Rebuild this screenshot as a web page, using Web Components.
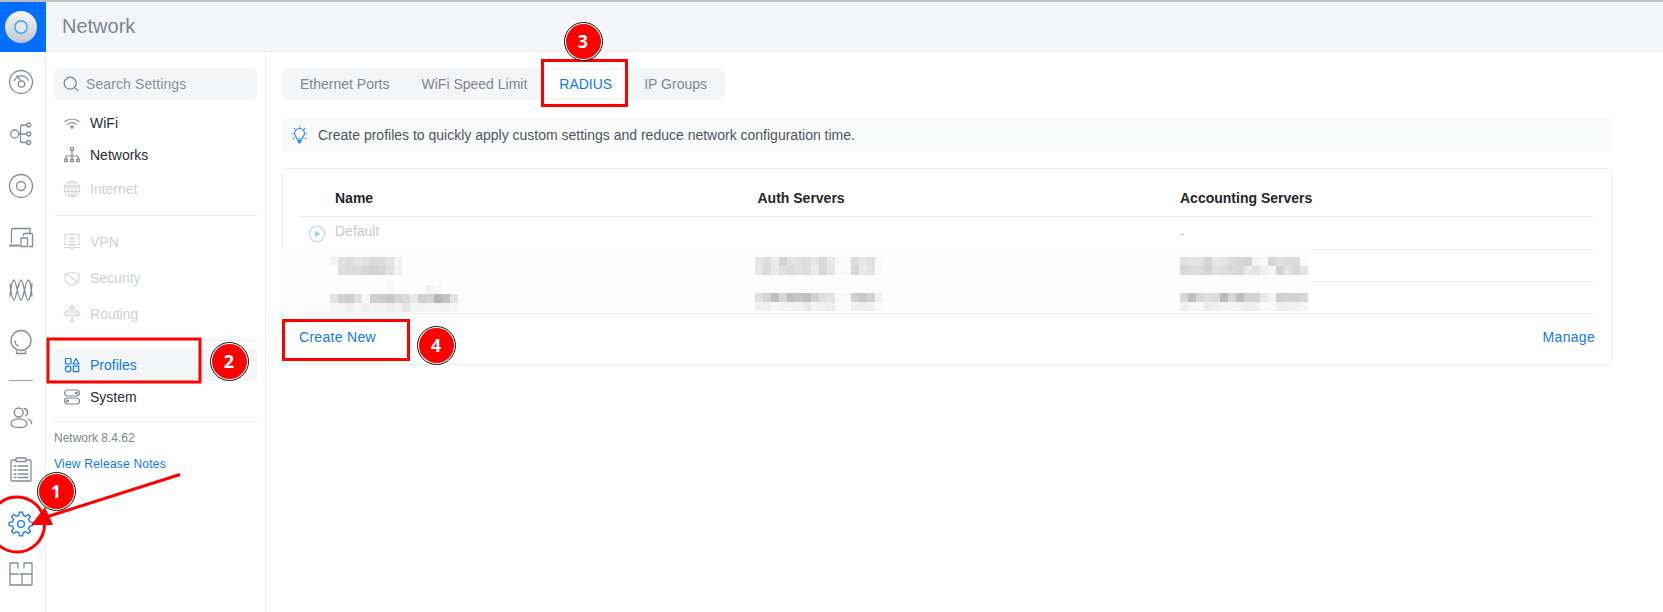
<!DOCTYPE html>
<html lang="en"><head><meta charset="utf-8"><title>Network</title>
<style>html,body{margin:0;height:100%;background:#fff;overflow:hidden;font-family:"Liberation Sans",Arial,sans-serif}</style>
</head><body>
<app-shell>
  <top-bar slot="top" title-text="Network"></top-bar>
  <icon-rail slot="rail"></icon-rail>
  <settings-nav slot="nav"></settings-nav>
  <div slot="main">
    <tab-strip></tab-strip>
    <hint-bar>Create profiles to quickly apply custom settings and reduce network configuration time.</hint-bar>
    <radius-card></radius-card>
  </div>
</app-shell>
<guide-layer></guide-layer>
<script>
const S='fill="none" stroke="currentColor" stroke-width="1.2" stroke-linecap="round" stroke-linejoin="round"';
const svg=(w,d)=>`<svg width="${w}" height="${w}" viewBox="0 0 ${w} ${w}" ${S}>${d}</svg>`;
function def(name,html,init){customElements.define(name,class extends HTMLElement{
  connectedCallback(){if(this.shadowRoot)return;this.attachShadow({mode:'open'}).innerHTML=typeof html==='function'?html(this):html;init&&init(this)}
})}
function gearPath(){let p='';const n=8,c=14;for(let k=0;k<n;k++){const a=k/n*Math.PI*2-Math.PI/2,w=Math.PI/n;
  const pt=(r,t)=>(c+r*Math.cos(t)).toFixed(2)+' '+(c+r*Math.sin(t)).toFixed(2);
  p+=(k?'L':'M')+pt(8.8,a-w*.62)+'L'+pt(12,a-w*.34)+'L'+pt(12,a+w*.34)+'L'+pt(8.8,a+w*.62)}
  return p+'Z'}
def('app-shell',`<style>
:host{display:grid;grid-template-columns:46px 220px 1fr;grid-template-rows:52px 560px;height:612px;box-sizing:border-box}
.top{grid-column:1/4}
.rail{border-right:1px solid #edeef0;box-sizing:border-box}
.nav{border-right:1px solid #edeef0;box-sizing:border-box}
.main{padding:16px 51px 0 16px;min-width:0}
</style><div class="top"><slot name="top"></slot></div><div class="rail"><slot name="rail"></slot></div><div class="nav"><slot name="nav"></slot></div><div class="main"><slot name="main"></slot></div>`);
def('top-bar',e=>`<style>
:host{display:flex;height:52px;box-sizing:border-box;border-top:2px solid #bcbec2;background:#f4f5f6;border-bottom:1px solid #ebedef}
.logo{width:46px;height:50px;margin-bottom:-1px;background:#006fff;display:flex;align-items:center;justify-content:center;flex:none;box-sizing:border-box;padding-right:4px}
h1{margin:0 0 0 16px;font:400 20px/48px "Liberation Sans",Arial,sans-serif;color:#7e8590}
</style><div class="logo"><svg width="34" height="34" viewBox="0 0 34 34"><defs><linearGradient id="g" x1="0" y1="0" x2="0" y2="1"><stop offset="0" stop-color="#f6f7f8"/><stop offset="1" stop-color="#c4c6d2"/></linearGradient></defs><circle cx="17" cy="17" r="16" fill="url(#g)"/><circle cx="17" cy="17" r="6.200" fill="#e3e8f0" stroke="#45a5f6" stroke-width="1.500"/></svg></div><h1>${e.getAttribute('title-text')}</h1>`);
const railIcons=[
`<circle cx="14" cy="14" r="11.500"/><path d="M7.500 12.500A7.500 7.500 0 0 1 21.300 12.200M9.800 7.800l4.200 5"/><circle cx="14.500" cy="16" r="3.200"/>`,
`<circle cx="7.700" cy="14" r="4"/><circle cx="21.700" cy="5" r="2"/><circle cx="21.700" cy="14" r="2"/><circle cx="21.700" cy="22.500" r="2"/><path d="M11.700 14h8M19.700 5h-3.700q-2.500 0-2.500 2.500v13q0 2 2.500 2h3.700"/>`,
`<circle cx="14" cy="14" r="11.500"/><circle cx="14" cy="14" r="4.500"/>`,
`<path d="M4.500 18.500V6a1.500 1.500 0 0 1 1.500-1.500h17V9"/><path d="M16.500 11.500V10.500a1 1 0 0 1 1-1h7a1 1 0 0 1 1 1v12h-3"/><rect x="14" y="14" width="6.500" height="8.500"/><path d="M3 21.500h9" stroke-width="2"/>`,
`<path d="M3 20C4 12 5 4 7 4S11.500 24 14 24 18.500 4 21 4 24 12 25 20M3 8C4 16 5 24 7 24S11.500 4 14 4 18.500 24 21 24 24 16 25 8"/>`,
`<circle cx="14" cy="12.500" r="10"/><path d="M9.500 23v2.500h9V23M11 18a6 6 0 0 1-3-5"/>`,
`<circle cx="11.700" cy="8.500" r="4.500"/><path d="M17 4.500a4 4 0 0 1 1.500 7.500"/><path d="M4 19.500C4 16.500 8 14.800 12 14.800 16.500 14.800 20 17 20 20 20 22.500 16 23.500 12 23.500 7 23.500 4 22 4 19.500z"/><path d="M21 15C24 16 25 17.500 24.500 19.500"/>`,
`<rect x="4" y="4" width="20" height="21" rx="1"/><rect x="9" y="2" width="10" height="3.500" fill="#fff"/><path d="M7 10h2M11 10h10M7 14h2M11 14h10M7 18h2M11 18h10M7 21.500h2M11 21.500h10"/>`,
`<circle cx="14" cy="14" r="3.400"/><path d="${gearPath()}"/>`,
`<path d="M11 8V3H3v22h22V3h-8v5M3 14h8M13 14h12M15 14v11"/>`];
def('rail-icon',e=>`<style>:host{display:flex;height:52px;align-items:center;justify-content:center;box-sizing:border-box;padding-right:3px;padding-top:${e.hasAttribute('active')?3:0}px;color:${e.hasAttribute('active')?'#0f78f5':'#868c96'}}svg{display:block;stroke-width:1.300}</style>${svg(28,railIcons[+e.getAttribute('i')])}`);
def('icon-rail',`<style>:host{display:block;padding-top:4px}.sep{height:24px;display:flex;align-items:center;justify-content:center;padding-right:3px}.sep i{display:block;width:24px;height:1px;background:#9aa0a8}</style>
<rail-icon i="0"></rail-icon><rail-icon i="1"></rail-icon><rail-icon i="2"></rail-icon><rail-icon i="3"></rail-icon><rail-icon i="4"></rail-icon><rail-icon i="5"></rail-icon>
<div class="sep"><i></i></div>
<rail-icon i="6"></rail-icon><rail-icon i="7"></rail-icon><rail-icon i="8" active></rail-icon><rail-icon i="9"></rail-icon>`);
const navIcons={
wifi:`<path d="M2 7.500a12 12 0 0 1 14 0M4.500 10.200a8 8 0 0 1 9 0"/><circle cx="9" cy="13" r="1.200"/>`,
net:`<path d="M9 5v5M3 13v-3h12v3M9 10v3"/><circle cx="9" cy="3" r="1.600"/><rect x="1.700" y="13" width="2.600" height="2.600"/><rect x="7.700" y="13" width="2.600" height="2.600"/><rect x="13.700" y="13" width="2.600" height="2.600"/>`,
globe:`<circle cx="9" cy="9" r="7.700"/><ellipse cx="9" cy="9" rx="3.500" ry="7.700"/><path d="M1.500 6.500h15M1.500 11.500h15M9 1.300v15.400"/>`,
vpn:`<rect x="2" y="1.500" width="14" height="10"/><rect x="6.800" y="5.500" width="4.400" height="3.500"/><path d="M7.500 5.500a1.500 1.500 0 0 1 3 0M1.500 14.500h5.500M11 14.500h5.500"/><circle cx="9" cy="14.500" r="1.800"/>`,
shield:`<path d="M2 5Q9 1.500 16 5V9C16 13 12.500 15.500 9 16.500 5.500 15.500 2 13 2 9zM3.500 4.500l11 9"/>`,
route:`<path d="M9 .8l2.700 2.700H10v3.700h3.800V5.500L16.700 8.500l-2.900 3V9.800H10V17H8V9.800H4.200v1.700L1.300 8.500l2.900-3v1.700H8V3.500H6.300z"/>`,
prof:`<rect x="2.500" y="2.500" width="5.500" height="5.500" rx=".6"/><path d="M13 2.500l3 5.500h-6z"/><circle cx="5.200" cy="13" r="2.800"/><rect x="10.300" y="10.200" width="5.500" height="5.500" rx=".6"/>`,
sys:`<rect x="1.500" y="2" width="15" height="6" rx="3"/><rect x="1.500" y="10" width="15" height="6" rx="3"/><circle cx="13.500" cy="5" r="1" /><circle cx="4.500" cy="13" r="1"/>`};
def('nav-item',e=>{const a=e.hasAttribute('active'),d=e.hasAttribute('disabled');const c=a?'#0f78f5':d?'#ccd0d4':'#2a2d32';const ic=a?'#0f78f5':d?'#d4d7da':'#808690';return `<style>
:host{display:flex;height:${e.getAttribute('h')||32}px;align-items:center;border-radius:4px;background:${a?'#f4f5f6':'transparent'};color:${c};font-size:14px}
.i{width:18px;height:18px;margin:0 9px 0 9px;color:${ic};display:block}
svg{display:block}
</style><span class="i">${svg(18,navIcons[e.getAttribute('icon')])}</span><slot></slot>`});
def('settings-nav',`<style>
:host{display:flex;flex-direction:column;padding:16px 8px 0;box-sizing:border-box;height:100%;font-family:"Liberation Sans",Arial,sans-serif}
.search{height:32px;border-radius:6px;background:#f4f5f6;display:flex;align-items:center;color:#8a9099;font-size:14px;margin-bottom:7px;letter-spacing:.1px}
.search svg{margin:0 7px 0 9px;display:block;color:#7c838d}
hr{border:0;height:1px;background:#edeef0;margin:8px 0;flex:none}
.ver{font-size:12px;line-height:20px;color:#7e8590;margin-top:-2px}
a{display:block;font-size:12px;line-height:20px;color:#0f78f5;margin-top:6px;text-decoration:none;letter-spacing:.23px}
</style>
<div class="search"><svg width="16" height="16" viewBox="0 0 16 16" fill="none" stroke="currentColor" stroke-width="1.200"><circle cx="7.200" cy="7.200" r="6"/><path d="M11.700 11.700L15 15"/></svg>Search Settings</div>
<nav-item icon="wifi">WiFi</nav-item>
<nav-item icon="net">Networks</nav-item>
<nav-item icon="globe" disabled style="margin-top:2px">Internet</nav-item>
<hr style="margin-top:10px">
<nav-item icon="vpn" disabled h="36">VPN</nav-item>
<nav-item icon="shield" disabled h="36">Security</nav-item>
<nav-item icon="route" disabled h="36">Routing</nav-item>
<hr>
<nav-item icon="prof" active>Profiles</nav-item>
<nav-item icon="sys">System</nav-item>
<hr>
<div class="ver">Network 8.4.62</div>
<a href="#">View Release Notes</a>`);
def('tab-strip',`<style>
:host{display:inline-flex;height:32px;box-sizing:border-box;padding:2px;background:#f4f5f6;border-radius:8px;font-size:14px;vertical-align:top}
span{padding:0 16px;line-height:28px;color:#808690;white-space:nowrap}
.on{background:#fff;color:#0f78f5;border-radius:4px}
</style><span>Ethernet Ports</span><span>WiFi Speed Limit</span><span class="on">RADIUS</span><span>IP Groups</span>`);
def('hint-bar',`<style>
:host{display:flex;align-items:center;height:35px;margin-top:17px;background:#f9fafa;border-radius:4px;font-size:14px;color:#50565e}
svg{margin:0 9px 0 8px;color:#1f82f6;display:block;flex:none}
</style><svg width="19" height="19" viewBox="0 0 19 19" fill="none" stroke="currentColor" stroke-width="1.100"><path d="M7 14c0-2-2.500-3-2.500-5.500a5 5 0 0 1 10 0C14.500 11 12 12 12 14zM9.500 1v1.300M2 8.500h1.300M15.700 8.500H17M4 3l1 1M15 3l-1 1M3 14l1-1M16 14l-1-1"/><path d="M7.300 15.800h4.400M8 17.600h3" stroke-width="1.500"/></svg><slot></slot>`);
def('pixel-block',e=>{const rows=e.getAttribute('rows').split('|').map(r=>r.trim().split(' '));
 return `<style>:host{display:block;position:absolute;left:${e.getAttribute('x')}px;top:${e.getAttribute('y')}px}
 div{display:flex}i{display:block;width:8px;height:9px}</style>`+rows.map(r=>'<div>'+r.map(c=>`<i style="background:#${c}${c}${c}"></i>`).join('')+'</div>').join('')});
def('radius-card',`<style>
:host{display:block;position:relative;box-sizing:border-box;height:197px;margin-top:16px;border:1px solid #edeef0;border-radius:4px;padding:0 16px;font-size:14px}
.r{display:grid;grid-template-columns:36px 422.500px 422.500px 1fr;border-bottom:1px solid #edeef0;height:32px;box-sizing:border-box;align-items:center}
.h{height:48px;font-weight:700;color:#24272b;padding-top:10px}
.d{height:33px;color:#c6c9cd;padding-bottom:5px}
.d .dash{padding-top:6px;color:#b0b4b9;font-size:12px}
.d svg{display:block;margin-top:7px;margin-left:9px}
.f{display:flex;justify-content:space-between;align-items:center;height:46px;color:#0f78f5;letter-spacing:.3px}
.mask{position:absolute;left:-1px;top:79px;width:1026px;height:63px;background:#fdfdfd}
</style>
<div class="r h"><span></span><span>Name</span><span>Auth Servers</span><span>Accounting Servers</span></div>
<div class="r d"><svg width="18" height="18" viewBox="0 0 18 18"><circle cx="9" cy="9" r="7.800" fill="none" stroke="#bcd9fb" stroke-width="1.200"/><path d="M6.800 5.500l5.500 3.500-5.500 3.500z" fill="#a9cefa"/></svg><span>Default</span><span></span><span class="dash">-</span></div>
<div class="r"></div><div class="r"></div>
<div class="f"><span>Create New</span><span>Manage</span></div>
<div class="mask"></div>
<pixel-block x="47" y="88" rows="f4 e2 dc e4 e0 da dc e2 f4 fe | fe de dc dc d6 d2 d6 e0 f0 fe"></pixel-block>
<pixel-block x="47" y="116" rows="fe fe fe fe fe fe fe f8 fe fe fe fe f2 f8 fe fe | e4 d2 ce e0 f8 d0 ce c8 d4 dc ea d0 d4 b8 c4 e4 | f6 f4 f0 f6 f0 f4 f4 ee f2 e6 f4 f4 f6 f4 f2 f6"></pixel-block>
<pixel-block x="472" y="88" rows="e4 dc ec d4 e2 e0 dc e4 d8 e8 f8 fa dc e4 e0 fa | e8 dc ea e0 dc e2 de ea d8 e6 fa f8 d6 ea e2 fa"></pixel-block>
<pixel-block x="472" y="124" rows="e0 d4 bf d8 bf c6 bf d2 de e4 fa f8 d0 c8 d2 f2 | f0 f0 f8 f2 f4 f2 ea f4 f2 ee fa fc f0 ee f0 fa"></pixel-block>
<pixel-block x="897" y="88" rows="de e4 e4 d4 e8 e4 dc d6 d2 f4 f8 d8 e0 dc dc fb | d8 dc dc d4 e2 de d8 d8 ea e2 f0 f6 d2 e2 d8 e4"></pixel-block>
<pixel-block x="897" y="124" rows="d8 bf d8 e0 dc bb d8 bf d4 d2 e8 f6 d0 d2 d2 d8 | ee f6 f8 ec f0 f4 f4 f2 ee f0 fb f8 ee f0 f0 f6"></pixel-block>`);
def('guide-num',e=>`<style>
:host{position:absolute;left:${e.getAttribute('x')-19.5}px;top:${e.getAttribute('y')-19.5}px;width:39px;height:39px;box-sizing:border-box;border-radius:50%;border:1px solid #111;background:#fff;display:flex;align-items:center;justify-content:center}
b{width:35px;height:35px;border-radius:50%;background:#f00;color:#fff;font:700 18px/35px "Open Sans",sans-serif;text-align:center;display:block}
</style><b><slot></slot></b>`);
def('guide-layer',`<style>
:host{position:absolute;left:0;top:0;width:1663px;height:612px;pointer-events:none}
svg{position:absolute;left:0;top:0}
</style>
<svg width="1663" height="612" fill="none" stroke="#f00" stroke-width="3">
<ellipse cx="17" cy="524.500" rx="27.500" ry="27.500"/>
<path d="M180 474.500L40 519"/>
<path d="M31 525L45 507L53 525z" fill="#f00" stroke="none"/>
<rect x="48" y="339" width="152" height="43"/>
<rect x="542.500" y="60.500" width="84" height="45"/>
<rect x="283.500" y="320.500" width="125" height="39"/>
</svg>
<guide-num x="56" y="491.500">1</guide-num>
<guide-num x="229" y="361">2</guide-num>
<guide-num x="583" y="41">3</guide-num>
<guide-num x="436" y="345">4</guide-num>`);
</script>
</body></html>
